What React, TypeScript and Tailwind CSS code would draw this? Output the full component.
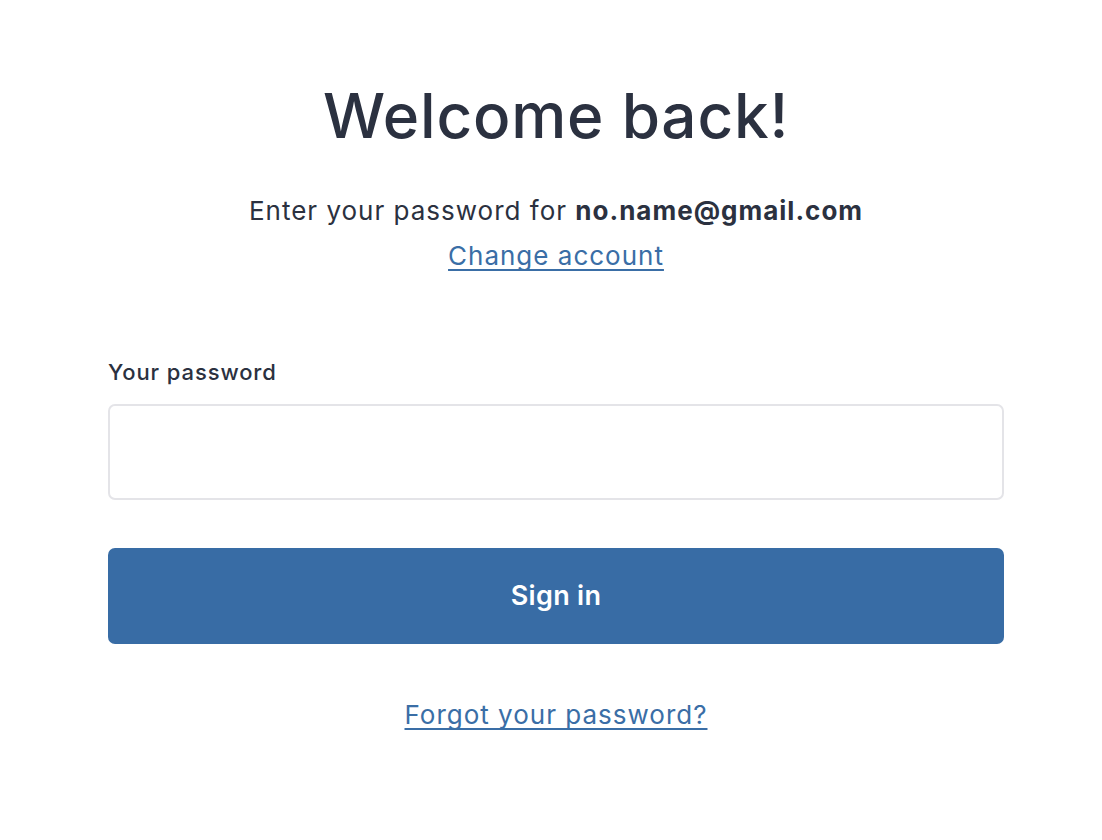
export default function App() {
  return (
    <div className="min-h-screen bg-white font-['Inter',sans-serif] text-[#2b3140]">
      <div className="ml-[108px] w-[896px] flex flex-col pt-[78px]">
        <h1 className="text-center text-[62px] leading-[76px] font-medium tracking-[0.8px]">Welcome back!</h1>

        <p className="text-center text-[26px] leading-[36px] tracking-[1px] mt-[39px]">
          Enter your password for <span className="font-bold">no.name@gmail.com</span>
        </p>
        <div className="text-center mt-[9px]">
          <a href="#" className="text-[26px] leading-[36px] tracking-[1px] text-[#3a6ea6] underline underline-offset-[4px] decoration-[2px] [text-decoration-skip-ink:none]">
            Change account
          </a>
        </div>

        <label className="text-[22px] leading-[30px] font-medium tracking-[0.9px] mt-[83px]">Your password</label>
        <input
          type="password"
          className="mt-[17px] h-[96px] w-full rounded-[7px] border-2 border-[#e4e4e8] px-5 text-[24px] outline-none"
        />

        <button className="mt-[48px] h-[96px] w-full rounded-[7px] bg-[#386ca5] text-white text-[27px] font-semibold tracking-[0.3px]">
          Sign in
        </button>

        <div className="text-center mt-[53px]">
          <a href="#" className="text-[26px] leading-[36px] tracking-[1px] text-[#3a6ea6] underline underline-offset-[4px] decoration-[2px] [text-decoration-skip-ink:none]">
            Forgot your password?
          </a>
        </div>
      </div>
    </div>
  )
}
